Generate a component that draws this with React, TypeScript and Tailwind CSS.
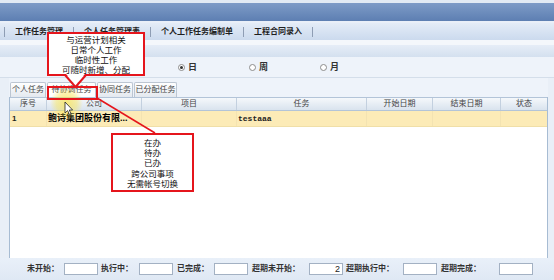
import React from "react";

function Sep() {
  return <span className="w-px h-[10px] bg-[#8e9db4] shrink-0" />;
}

function Radio({ checked, label }: { checked?: boolean; label: string }) {
  return (
    <div className="w-[71px] flex items-center shrink-0">
      <span className="w-[7px] h-[7px] rounded-full border border-[#8c8c8c] bg-white flex items-center justify-center">
        {checked && <span className="w-[3px] h-[3px] rounded-full bg-[#333]" />}
      </span>
      <span className="ml-[3px] text-[9px] leading-none font-bold text-[#333]">{label}</span>
    </div>
  );
}

function Tab({ label, w, active }: { label: string; w: string; active?: boolean }) {
  return (
    <div
      className={`${w} h-[15px] mr-px border border-b-0 border-[#bcc6d2] rounded-t-[2px] flex items-center justify-center text-[8px] leading-none whitespace-nowrap text-[#444] ${
        active ? "bg-white" : "bg-gradient-to-b from-[#ffffff] to-[#e4e9ef]"
      }`}
    >
      {label}
    </div>
  );
}

function HeadCell({ label, w, last }: { label: string; w: string; last?: boolean }) {
  return (
    <div
      className={`${w} h-full flex items-center justify-center text-[8px] leading-none text-[#444] ${
        last ? "" : "border-r border-[#c3d0df]"
      }`}
    >
      {label}
    </div>
  );
}

function Field({ label, lw, value }: { label: string; lw: string; value?: string }) {
  return (
    <div className="flex items-center shrink-0">
      <span className={`${lw} text-[8px] leading-none font-bold text-[#333] whitespace-nowrap`}>{label}</span>
      <span className="w-[34px] h-[12px] bg-white border border-[#a3b1c3] flex items-center justify-end pr-[2px] text-[9px] leading-none text-[#222]">
        {value}
      </span>
    </div>
  );
}

export default function App() {
  return (
    <div className="relative w-[554px] h-[280px] overflow-hidden bg-[#eef3fa] flex flex-col font-['Liberation_Sans','Noto_Sans_CJK_SC',sans-serif] text-[#222]">
      {/* top chrome */}
      <div className="h-[3px] bg-[#e2eaf4] shrink-0" />
      <div className="h-[18px] shrink-0 bg-gradient-to-b from-[#7e9bc7] to-[#5d7fb2]" />
      <div className="h-[2px] bg-[#e9eff8] shrink-0" />
      <div className="h-[17px] shrink-0 bg-gradient-to-b from-[#e4ecf7] to-[#cbdaee] flex items-center pl-[4px] text-[8px] font-bold leading-none text-[#1e1e1e]">
        <Sep />
        <span className="mx-[10px] whitespace-nowrap">工作任务管理</span>
        <Sep />
        <span className="mx-[10px] whitespace-nowrap">个人任务管理表</span>
        <Sep />
        <span className="mx-[10px] whitespace-nowrap">个人工作任务编制单</span>
        <Sep />
        <span className="mx-[10px] whitespace-nowrap">工程合同录入</span>
        <Sep />
      </div>
      <div className="h-[5px] bg-[#f4f7fb] shrink-0" />
      <div className="h-[12px] shrink-0 bg-gradient-to-b from-[#e6edf7] to-[#d4e0ef]" />
      <div className="h-[20px] shrink-0 bg-[#eef3fa] flex items-center pl-[178px]">
        <Radio checked label="日" />
        <Radio label="周" />
        <Radio label="月" />
      </div>
      <div className="h-px bg-[#d4deea] shrink-0" />

      {/* main */}
      <div className="flex-1 flex min-h-0">
        <div className="w-[9px] shrink-0 bg-[#e9eff7]" />
        <div className="w-[539px] shrink-0 flex flex-col">
          <div className="h-[19px] shrink-0 flex items-end pl-px">
            <Tab label="个人任务" w="w-[36px]" />
            <Tab label="待协调任务" w="w-[49px]" active />
            <Tab label="协同任务" w="w-[36px]" />
            <Tab label="已分配任务" w="w-[43px]" />
          </div>
          <div className="flex-1 flex flex-col bg-white border-l border-r border-[#a7bcd3]">
            <div className="h-[14px] shrink-0 flex bg-gradient-to-b from-[#f5f8fb] to-[#d9e3ee] border-t border-b border-[#b3c4d8]">
              <HeadCell label="序号" w="w-[37px]" />
              <HeadCell label="公司" w="w-[95px]" />
              <HeadCell label="项目" w="w-[95px]" />
              <HeadCell label="任务" w="w-[130px]" />
              <HeadCell label="开始日期" w="w-[66px]" />
              <HeadCell label="结束日期" w="w-[68px]" />
              <HeadCell label="状态" w="flex-1" last />
            </div>
            <div className="h-[16px] shrink-0 flex items-center bg-[#fcebb7] border-b border-[#f0dfa8]">
              <div className="w-[37px] h-full flex items-center pl-[2px] text-[8px] font-bold leading-none border-r border-[#f3e3b2]">1</div>
              <div className="w-[95px] h-full flex items-center pl-px text-[9px] font-bold leading-none text-black whitespace-nowrap overflow-hidden border-r border-[#f3e3b2]">
                鲍诗集团股份有限...
              </div>
              <div className="w-[95px] h-full border-r border-[#f3e3b2]" />
              <div className="w-[130px] h-full flex items-center pl-px font-['Liberation_Mono',monospace] text-[8px] font-bold leading-none border-r border-[#f3e3b2]">
                testaaa
              </div>
              <div className="w-[66px] h-full border-r border-[#f3e3b2]" />
              <div className="w-[68px] h-full border-r border-[#f3e3b2]" />
              <div className="flex-1 h-full" />
            </div>
            <div className="flex-1" />
          </div>
        </div>
        <div className="flex-1 bg-[#e9eff7]" />
      </div>

      {/* bottom bar */}
      <div className="h-[22px] shrink-0 bg-gradient-to-b from-[#e9f0f9] to-[#dfe8f4] flex items-center pl-[27px]">
        <Field label="未开始：" lw="w-[37px]" />
        <div className="w-[3px]" />
        <Field label="执行中：" lw="w-[38px]" />
        <div className="w-[4px]" />
        <Field label="已完成：" lw="w-[37px]" />
        <div className="w-[4px]" />
        <Field label="超期未开始：" lw="w-[57px]" value="2" />
        <div className="w-[3px]" />
        <Field label="超期执行中：" lw="w-[57px]" />
        <div className="w-[4px]" />
        <Field label="超期完成：" lw="w-[58px]" />
      </div>

      {/* annotations */}
      <div className="absolute left-[50px] top-[87px] w-[33px] h-[32px] rounded-full bg-[radial-gradient(circle,rgba(250,228,80,0.75)_0%,rgba(250,228,80,0.45)_45%,rgba(250,228,80,0)_72%)] pointer-events-none" />
      <div className="absolute left-[47px] top-[86px] w-[51px] h-[14px] border-2 border-[#e5151c]" />

      <div className="absolute left-[47px] top-[32px] w-[98px] h-[44px] bg-white border-2 border-[#e5151c] flex flex-col items-center justify-center pt-[2px] text-[8.5px] leading-[10px] text-[#111]">
        <span>与运营计划相关</span>
        <span>日常个人工作</span>
        <span>临时性工作</span>
        <span>可随时新增、分配</span>
      </div>

      <div className="absolute left-[111px] top-[133px] w-[83px] h-[59px] bg-white border-2 border-[#e5151c] flex flex-col items-center justify-center pt-[2px] text-[8.5px] leading-[10.3px] text-[#111]">
        <span>在办</span>
        <span>待办</span>
        <span>已办</span>
        <span>跨公司事项</span>
        <span>无需帐号切换</span>
      </div>

      <svg className="absolute left-0 top-0 pointer-events-none" width="554" height="280" viewBox="0 0 554 280">
        <polygon points="66,74 75.5,85 85,74" fill="#ffffff" />
        <polyline points="65,75 75.5,87 86,75" fill="none" stroke="#e5151c" strokeWidth="2" />
        <line x1="97" y1="98" x2="155" y2="133" stroke="#e5151c" strokeWidth="1.5" />
        <path
          d="M65 102 L65 113 L67.6 110.6 L69.4 114.6 L71 113.9 L69.3 110 L72.6 110 Z"
          fill="#ffffff"
          stroke="#222"
          strokeWidth="0.8"
          strokeLinejoin="round"
        />
      </svg>
    </div>
  );
}
